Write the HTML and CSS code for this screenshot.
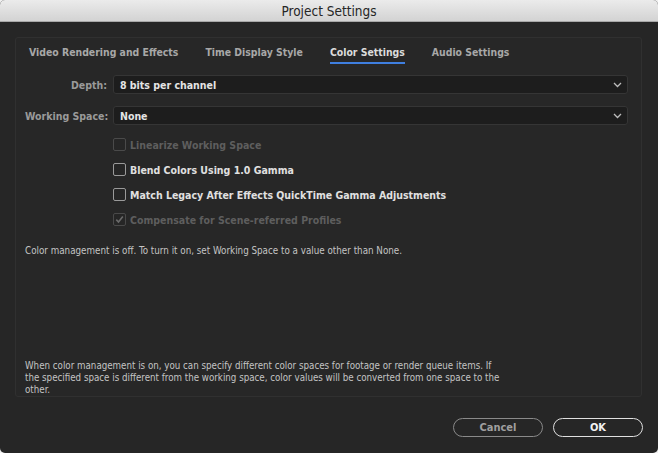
FILE: index.html
```html
<!DOCTYPE html>
<html>
<head>
<meta charset="utf-8">
<link rel="stylesheet" href="styles.css">
</head>
<body>
<div class="window">
  <div class="titlebar">Project Settings</div>
  <div class="content">
    <div class="panel">
      <div class="tabs">
        <span class="tab">Video Rendering and Effects</span>
        <span class="tab">Time Display Style</span>
        <span class="tab active">Color Settings</span>
        <span class="tab">Audio Settings</span>
      </div>
      <div class="field first">
        <label class="label">Depth:</label>
        <div class="select"><span>8 bits per channel</span>
          <svg class="chev" width="9" height="6" viewBox="0 0 9 6"><path d="M1 1 L4.5 4.5 L8 1" fill="none" stroke="#bdbdbd" stroke-width="1.3"/></svg>
        </div>
      </div>
      <div class="field">
        <label class="label">Working Space:</label>
        <div class="select"><span>None</span>
          <svg class="chev" width="9" height="6" viewBox="0 0 9 6"><path d="M1 1 L4.5 4.5 L8 1" fill="none" stroke="#bdbdbd" stroke-width="1.3"/></svg>
        </div>
      </div>
      <div class="checks">
        <div class="check disabled"><span class="box"></span><span>Linearize Working Space</span></div>
        <div class="check"><span class="box"></span><span>Blend Colors Using 1.0 Gamma</span></div>
        <div class="check"><span class="box"></span><span>Match Legacy After Effects QuickTime Gamma Adjustments</span></div>
        <div class="check disabled"><span class="box"><svg width="11" height="11" viewBox="0 0 11 11"><path d="M2.3 5.6 L4.5 8 L8.8 2.6" fill="none" stroke="#6a6a6a" stroke-width="1.6"/></svg></span><span>Compensate for Scene-referred Profiles</span></div>
      </div>
      <p class="note">Color management is off. To turn it on, set Working Space to a value other than None.</p>
      <div class="spacer"></div>
      <p class="help">When color management is on, you can specify different color spaces for footage or render queue items. If the specified space is different from the working space, color values will be converted from one space to the other.</p>
    </div>
    <div class="buttons">
      <button class="btn cancel">Cancel</button>
      <button class="btn ok">OK</button>
    </div>
  </div>
</div>
</body>
</html>
```
FILE: styles.css
```css
html, body {
  margin: 0;
  padding: 0;
  background: #f0f0f0;
}
body {
  width: 658px;
  height: 453px;
  overflow: hidden;
  font-family: "DejaVu Sans Condensed", "DejaVu Sans", sans-serif;
}
.window {
  width: 658px;
  height: 453px;
  background: #262626;
  border-radius: 5px;
  overflow: hidden;
  display: flex;
  flex-direction: column;
}
.titlebar {
  height: 22px;
  flex: none;
  background: linear-gradient(#ebebeb, #d3d3d3);
  border-bottom: 1px solid #a8a8a8;
  box-sizing: border-box;
  color: #262626;
  font-size: 13.5px;
  line-height: 22px;
  text-align: center;
}
.content {
  flex: 1;
  padding: 15px 16px 0 15px;
  display: flex;
  flex-direction: column;
}
.panel {
  height: 360px;
  box-sizing: border-box;
  border: 1px solid #303030;
  border-radius: 3px;
  background: #272727;
  display: flex;
  flex-direction: column;
  padding: 0 13px 0 9px;
}
.tabs {
  display: flex;
  gap: 27px;
  padding: 0 0 0 4px;
  height: 26px;
  box-sizing: border-box;
}
.tab {
  font-size: 10.4px;
  font-weight: bold;
  color: #a8a8a8;
  padding-top: 8px;
  line-height: 13px;
  height: 26px;
  box-sizing: border-box;
  white-space: nowrap;
}
.tab.active {
  color: #dcdcdc;
  border-bottom: 2px solid #3f7fe0;
}
.field {
  display: flex;
  align-items: center;
  margin-top: 12px;
  height: 19px;
}
.field.first {
  margin-top: 11px;
}
.label {
  flex: none;
  width: 88px;
  box-sizing: border-box;
  text-align: right;
  white-space: nowrap;
  font-size: 10.5px;
  font-weight: bold;
  color: #9a9a9a;
  padding-right: 6px;
}
.select {
  flex: 1;
  height: 19px;
  box-sizing: border-box;
  background: #1d1d1d;
  border: 1px solid #353535;
  border-radius: 3px;
  display: flex;
  align-items: center;
  justify-content: space-between;
  padding: 0 5px 0 6px;
  font-size: 10.5px;
  font-weight: bold;
  color: #e4e4e4;
}
.checks {
  margin-top: 7px;
  padding-left: 88px;
  display: flex;
  flex-direction: column;
}
.check {
  display: flex;
  align-items: center;
  height: 25px;
  font-size: 10.5px;
  font-weight: bold;
  color: #e0e0e0;
  gap: 4px;
  white-space: nowrap;
}
.check.disabled {
  color: #5e5e5e;
}
.box {
  width: 13px;
  height: 13px;
  box-sizing: border-box;
  border: 1px solid #9a9a9a;
  border-radius: 2px;
  background: #262626;
  display: flex;
  align-items: center;
  justify-content: center;
}
.check.disabled .box {
  border-color: #4a4a4a;
}
.note {
  margin: 13px 0 0 0;
  font-size: 9.75px;
  color: #c4c4c4;
}
.spacer { flex: 1; }
.help {
  margin: 0;
  font-size: 9.7px;
  line-height: 12px;
  color: #c4c4c4;
  width: 478px;
}
.buttons {
  display: flex;
  justify-content: flex-end;
  gap: 10px;
  margin-top: 21px;
  margin-right: -1px;
}
.btn {
  width: 90px;
  height: 19px;
  border-radius: 10px;
  background: #262626;
  font-family: inherit;
  font-size: 11px;
  font-weight: bold;
  padding: 0;
}
.btn.cancel {
  border: 1px solid #8a8a8a;
  color: #9f9f9f;
}
.btn.ok {
  border: 1px solid #e0e0e0;
  color: #f2f2f2;
}
```
